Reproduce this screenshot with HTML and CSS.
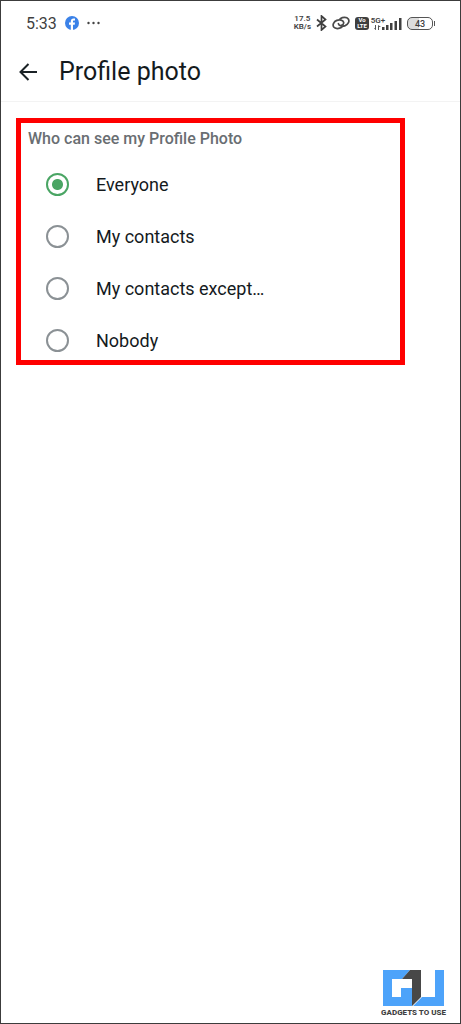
FILE: index.html
```
<!DOCTYPE html>
<html lang="en">
<head>
    <meta charset="utf-8">
    <meta name="viewport" content="width=device-width, initial-scale=1">
    <title>Profile photo</title>
    <link rel="stylesheet" href="styles.css">
</head>
<body>
<div class="screen">
    <div class="status-bar">
        <span class="time">5:33</span>
        <svg class="facebook" width="14" height="14" viewBox="0 0 14 14">
            <circle cx="7" cy="7" r="7" fill="#3b82e8"/>
            <path d="M5.800 13.900V8.700H4V6.600h1.800V5.400c0-2 1-3 2.800-3l1.400.1v1.900H9c-.8 0-1 .4-1 1v1.200h2l-.3 2.100H8v5.200z" fill="#fff"/>
        </svg>
        <svg class="more" width="13" height="4" viewBox="0 0 13 4" fill="#444">
            <circle cx="1.500" cy="2" r="1.200"/>
            <circle cx="6.500" cy="2" r="1.200"/>
            <circle cx="11.500" cy="2" r="1.200"/>
        </svg>
        <div class="status-icons">
            <span class="speed"><span>17.5</span><span>KB/s</span></span>
            <svg width="11" height="16" viewBox="0 0 11 16" fill="none" stroke="#3f3f3f" stroke-width="1.700">
                <path d="M1 4.500l8.500 7L5.500 15V1l4 3.500-8.500 7"/>
            </svg>
            <svg class="link" width="18" height="14" viewBox="0 0 18 14" fill="none" stroke="#4a4a4a" stroke-width="1.700" stroke-linecap="round">
                <path d="M9.800 11.300C7 13 3.200 13 1.700 11C.2 8.700 1.800 5.600 4.800 4.400C7.800 3.300 11 4.200 11.600 6.300C11.900 7.500 11 8.800 9.500 9.400"/>
                <path d="M8.200 2.700C11 1 14.800 1 16.300 3C17.800 5.300 16.200 8.400 13.200 9.600C10.200 10.700 7 9.800 6.400 7.700"/>
            </svg>
            <span class="volte"><span>Vo</span><span>LTE</span></span>
            <span class="network">
                <span class="network-type">
                    <span>5G+</span>
                    <svg width="8" height="5" viewBox="0 0 8 5" fill="#555">
                        <path d="M0 3h1V0h1v5H1.500zM4 0l3 2H5v3H4z"/>
                    </svg>
                </span>
                <svg width="20" height="12" viewBox="0 0 20 12" fill="#3f3f3f">
                    <rect x="0" y="9" width="2.500" height="3"/>
                    <rect x="4" y="7" width="2.500" height="5"/>
                    <rect x="8" y="5" width="2.500" height="7"/>
                    <rect x="12.500" y="3" width="2.500" height="9"/>
                    <rect x="17" y="0" width="2.500" height="12"/>
                </svg>
            </span>
            <span class="battery">43</span>
        </div>
    </div>

    <header class="header">
        <button class="back" type="button" aria-label="Back">
            <svg width="20" height="20" viewBox="0 0 20 20" fill="none" stroke="#1b2226" stroke-width="2">
                <path d="M20 10H3.500M11.500 2L3.500 10l8 8"/>
            </svg>
        </button>
        <h1>Profile photo</h1>
    </header>

    <main class="content">
        <fieldset class="privacy">
            <legend>Who can see my Profile Photo</legend>
            <label class="option"><input type="radio" name="visibility" checked>Everyone</label>
            <label class="option"><input type="radio" name="visibility">My contacts</label>
            <label class="option"><input type="radio" name="visibility">My contacts except…</label>
            <label class="option"><input type="radio" name="visibility">Nobody</label>
        </fieldset>
    </main>

    <footer class="brand">
        <svg width="61" height="36" viewBox="0 0 61 36">
            <path d="M0 0H27L19 9H9V27H18V18H29V36H0z" fill="#4da3fa"/>
            <path d="M27 0H38V27L29 36V9H19z" fill="#484848"/>
            <path d="M52 0H61V36H30L39 27H52z" fill="#4da3fa"/>
        </svg>
        <span>GADGETS TO USE</span>
    </footer>
</div>
</body>
</html>
```
FILE: styles.css
```
* {
    box-sizing: border-box;
}

body {
    margin: 0;
    background: #fff;
    color: #141a1d;
    font-family: Roboto, sans-serif;
}

.screen {
    display: flex;
    flex-direction: column;
    min-height: 100vh;
    border: 1px solid #3c3c3c;
}

/* status bar */
.status-bar {
    display: flex;
    align-items: center;
    height: 44px;
    padding: 0 25px;
    color: #3f3f3f;
}

.time {
    font-size: 16px;
}

.facebook {
    margin-left: 8px;
}

.more {
    margin-left: 8px;
}

.status-icons {
    display: flex;
    align-items: center;
    gap: 5px;
    margin-left: auto;
}

.speed {
    display: flex;
    flex-direction: column;
    font-size: 8px;
    font-weight: 600;
    line-height: 8px;
    text-align: center;
}

.volte {
    display: flex;
    flex-direction: column;
    justify-content: center;
    width: 14px;
    height: 13px;
    border-radius: 3px;
    background: #3f3f3f;
    color: #fff;
    font-size: 6px;
    font-weight: 700;
    line-height: 6px;
    text-align: center;
}

.network {
    display: flex;
    align-items: flex-end;
}

.network-type {
    display: flex;
    flex-direction: column;
    align-items: center;
    width: 8px;
    font-size: 8px;
    font-weight: 600;
    line-height: 8px;
}

.battery {
    position: relative;
    width: 26px;
    height: 13px;
    margin-right: 2px;
    border: 1px solid #555;
    border-radius: 5px;
    background: linear-gradient(to right, #ddd 45%, #fff 45%);
    font-size: 9px;
    font-weight: 500;
    line-height: 12px;
    text-align: center;
}

.battery::after {
    content: "";
    position: absolute;
    top: 3px;
    right: -3px;
    width: 1px;
    height: 5px;
    background: #555;
}

/* title bar */
.header {
    display: flex;
    align-items: center;
    gap: 22px;
    height: 57px;
    padding: 0 16px 2px;
    border-bottom: 1px solid #f3f3f3;
}

.back {
    display: flex;
    padding: 0;
    border: 0;
    background: none;
}

.header h1 {
    margin: 0;
    font-size: 25px;
    font-weight: 400;
    line-height: 32px;
}

/* visibility options */
.content {
    padding: 16px 55px 16px 15px;
}

.privacy {
    display: flex;
    flex-direction: column;
    gap: 12px;
    min-width: 0;
    margin: 0;
    padding: 6px 7px 0;
    border: 5px solid #f00;
}

.privacy legend {
    float: left;
    padding: 0;
    margin-bottom: 3px;
    color: #696e72;
    font-size: 16px;
    font-weight: 500;
    line-height: 20px;
}

.option {
    display: flex;
    align-items: center;
    gap: 27px;
    height: 40px;
    padding-left: 18px;
    font-size: 18px;
}

.option input {
    appearance: none;
    width: 23px;
    height: 23px;
    margin: 0;
    border: 2px solid #8b9195;
    border-radius: 50%;
}

.option input:checked {
    border-color: #4aa564;
    background: radial-gradient(circle, #4aa564 5px, transparent 6px);
}

/* site mark */
.brand {
    display: flex;
    flex-direction: column;
    align-items: center;
    align-self: flex-end;
    gap: 2px;
    margin-top: auto;
    padding: 0 14px 6px;
    color: #3f3f3f;
    font-size: 8px;
    font-weight: 800;
    line-height: 9px;
}
```
